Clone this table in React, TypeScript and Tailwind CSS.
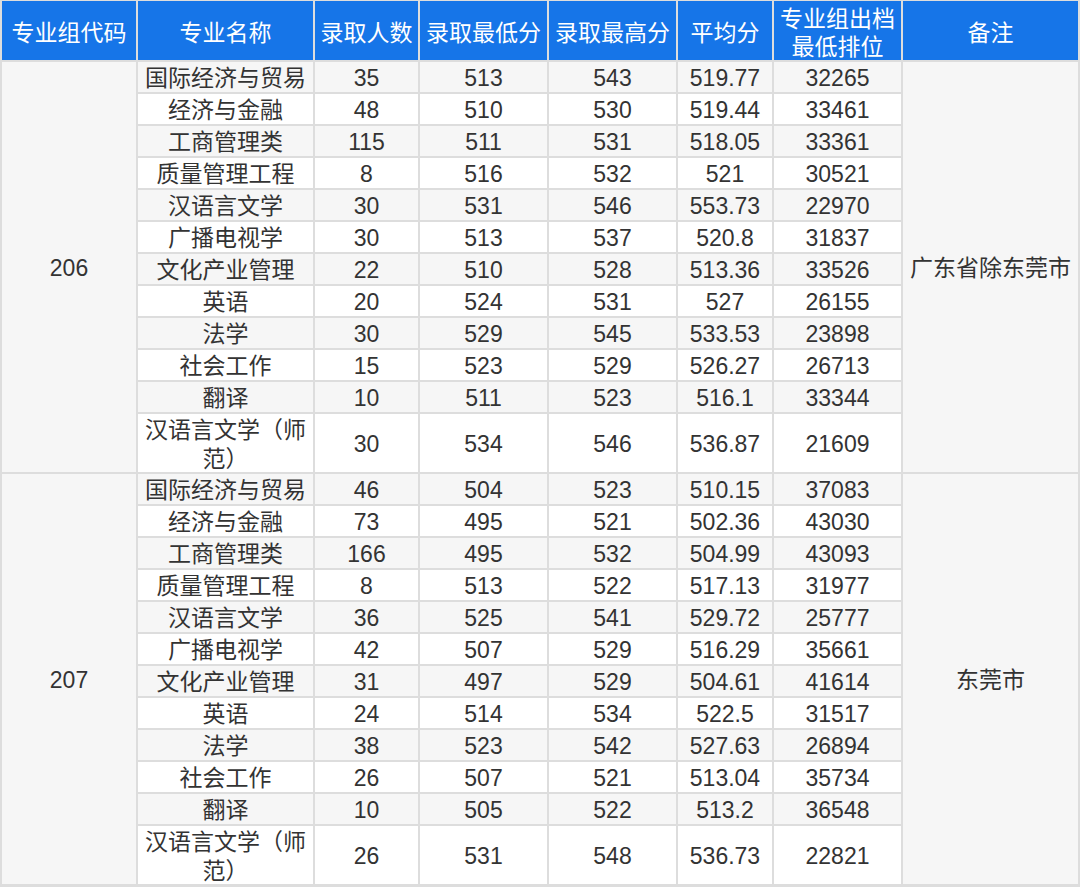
import { Fragment } from "react";

const headers = ["专业组代码", "专业名称", "录取人数", "录取最低分", "录取最高分", "平均分", "专业组出档最低排位", "备注"];

type Row = [string, string, string, string, string, string];

const groups: { code: string; note: string; place: string; rows: Row[] }[] = [
  {
    code: "206",
    note: "广东省除东莞市",
    place: "row-start-2 row-span-12",
    rows: [
      ["国际经济与贸易", "35", "513", "543", "519.77", "32265"],
      ["经济与金融", "48", "510", "530", "519.44", "33461"],
      ["工商管理类", "115", "511", "531", "518.05", "33361"],
      ["质量管理工程", "8", "516", "532", "521", "30521"],
      ["汉语言文学", "30", "531", "546", "553.73", "22970"],
      ["广播电视学", "30", "513", "537", "520.8", "31837"],
      ["文化产业管理", "22", "510", "528", "513.36", "33526"],
      ["英语", "20", "524", "531", "527", "26155"],
      ["法学", "30", "529", "545", "533.53", "23898"],
      ["社会工作", "15", "523", "529", "526.27", "26713"],
      ["翻译", "10", "511", "523", "516.1", "33344"],
      ["汉语言文学（师范）", "30", "534", "546", "536.87", "21609"],
    ],
  },
  {
    code: "207",
    note: "东莞市",
    place: "row-start-14 row-span-12",
    rows: [
      ["国际经济与贸易", "46", "504", "523", "510.15", "37083"],
      ["经济与金融", "73", "495", "521", "502.36", "43030"],
      ["工商管理类", "166", "495", "532", "504.99", "43093"],
      ["质量管理工程", "8", "513", "522", "517.13", "31977"],
      ["汉语言文学", "36", "525", "541", "529.72", "25777"],
      ["广播电视学", "42", "507", "529", "516.29", "35661"],
      ["文化产业管理", "31", "497", "529", "504.61", "41614"],
      ["英语", "24", "514", "534", "522.5", "31517"],
      ["法学", "38", "523", "542", "527.63", "26894"],
      ["社会工作", "26", "507", "521", "513.04", "35734"],
      ["翻译", "10", "505", "522", "513.2", "36548"],
      ["汉语言文学（师范）", "26", "531", "548", "536.73", "22821"],
    ],
  },
];

export default function App() {
  return (
    <div
      className="w-[1080px] h-[887px] bg-white text-[23px] leading-[29px] text-[#333333]"
      style={{ fontFamily: '"Liberation Sans", "Noto Sans CJK SC", sans-serif' }}
    >
      <div className="grid grid-cols-[134px_175px_103px_127px_127px_94px_127px_175px] gap-[2px] bg-[#dddddd] px-[2px] pt-px pb-[3px]">
        {headers.map((h) => (
          <div
            key={h}
            className="h-[59px] bg-[#1675e8] text-white flex items-center justify-center text-center leading-[28px] px-[2px] pt-[4px]"
          >
            {h}
          </div>
        ))}
        {groups.map((g) => (
          <Fragment key={g.code}>
            <div className={`${g.place} col-start-1 bg-[#f6f6f6] flex items-center justify-center pt-[3px]`}>
              {g.code}
            </div>
            <div className={`${g.place} col-start-8 bg-[#f6f6f6] flex items-center justify-center pt-[3px]`}>
              {g.note}
            </div>
            {g.rows.map((r, i) => {
              const bg = i % 2 === 0 ? "bg-[#f6f6f6]" : "bg-white";
              const h = i === 11 ? "h-[58px]" : "h-[30px]";
              return r.map((c, j) => (
                <div
                  key={g.code + i + "-" + j}
                  className={`${bg} ${h} flex items-center justify-center text-center px-[3px] pt-[3px]`}
                >
                  {c}
                </div>
              ));
            })}
          </Fragment>
        ))}
      </div>
    </div>
  );
}
